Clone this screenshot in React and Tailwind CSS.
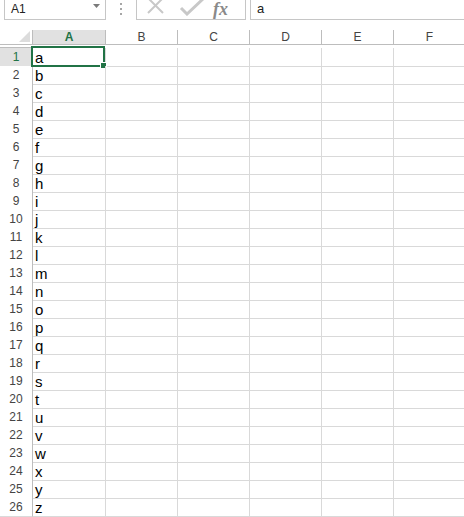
const COLS = ["A", "B", "C", "D", "E", "F"];
const LETTERS = "abcdefghijklmnopqrstuvwxyz".split("");

const TopBar = () => (
  <div className="flex h-[20px] overflow-hidden">
    {/* name box */}
    <div className="ml-[4px] flex h-[20px] w-[102px] items-center justify-between border-x border-b border-[#c6c6c6] pl-[6px] pr-[5px]">
      <span className="text-[12px] leading-none text-[#222] pb-[2px]">A1</span>
      <svg width="7" height="4" viewBox="0 0 7 4" className="mb-[8px]">
        <path d="M0 0 L7 0 L3.5 4 Z" fill="#7a7a7a" />
      </svg>
    </div>
    {/* grip dots */}
    <div className="flex w-[30px] flex-col items-center gap-[3px] pt-[3px]">
      <span className="block h-[2px] w-[2px] bg-[#a6a6a6]" />
      <span className="block h-[2px] w-[2px] bg-[#a6a6a6]" />
      <span className="block h-[2px] w-[2px] bg-[#a6a6a6]" />
    </div>
    {/* cancel / enter / fx */}
    <div className="flex h-[20px] w-[110px] items-start border-x border-b border-[#c6c6c6]">
      <svg width="18" height="18" viewBox="0 0 18 18" className="ml-[10px] mt-[-3px]">
        <path d="M1 1 L16 16 M16 1 L1 16" stroke="#c8c8c8" strokeWidth="2" fill="none" />
      </svg>
      <svg width="26" height="18" viewBox="0 0 26 18" className="ml-[14px] mt-[-2px]">
        <path d="M2 10 L8 16 L24 1" stroke="#c8c8c8" strokeWidth="3" fill="none" />
      </svg>
      <span className="ml-[8px] text-[18px] italic font-bold leading-[19px] text-[#8a8a8a] [font-family:'Liberation_Serif',serif]">
        fx
      </span>
    </div>
    {/* formula input */}
    <div className="ml-[4px] flex h-[20px] flex-1 items-center border-l border-b border-[#c6c6c6] pl-[6px]">
      <span className="text-[13px] leading-none text-[#222] pb-[3px]">a</span>
    </div>
  </div>
);

const HeaderRow = () => (
  <div className="grid h-[18px] grid-cols-[33px_73px_72px_72px_72px_72px_72px]">
    <div className="relative border-r border-b border-[#bdbdbd] bg-white">
      <svg width="11" height="11" viewBox="0 0 11 11" className="absolute right-[2px] bottom-[2px]">
        <path d="M11 0 L11 11 L0 11 Z" fill="#dcdcdc" />
      </svg>
    </div>
    {COLS.map((c) => (
      <div
        key={c}
        className={
          c === "A"
            ? "flex items-center justify-center border-r border-b border-[#bdbdbd] bg-[#e1e1e1] text-[12px] font-bold leading-none text-[#217346]"
            : "flex items-center justify-center border-r border-b border-[#bdbdbd] bg-white text-[12px] leading-none text-[#444]"
        }
      >
        {c}
      </div>
    ))}
    <div className="border-b border-[#bdbdbd]" />
  </div>
);

const Row = ({ n, letter }) => {
  const selected = n === 1;
  return (
    <div className="grid h-[18px] grid-cols-[33px_73px_72px_72px_72px_72px_72px]">
      <div
        className={
          selected
            ? "flex items-center justify-center border-r border-b border-[#bdbdbd] bg-[#e1e1e1] text-[12px] leading-none text-[#217346]"
            : "flex items-center justify-center border-r border-b border-[#dadada] border-r-[#bdbdbd] bg-white text-[12px] leading-none text-[#444]"
        }
      >
        {n}
      </div>
      <div className="relative border-r border-b border-[#d9d9d9] pl-[2px] pt-[1px] text-[15px] leading-[17px] text-black">
        {letter}
        {selected && (
          <>
            <div className="pointer-events-none absolute -left-[2px] -top-[2px] right-0 -bottom-[1px] border-2 border-[#217346]" />
            <div className="absolute -right-[2px] -bottom-[3px] h-[7px] w-[7px] border border-white bg-[#217346]" />
          </>
        )}
      </div>
      <div className="border-r border-b border-[#d9d9d9]" />
      <div className="border-r border-b border-[#d9d9d9]" />
      <div className="border-r border-b border-[#d9d9d9]" />
      <div className="border-r border-b border-[#d9d9d9]" />
      <div className="border-r border-b border-[#d9d9d9]" />
    </div>
  );
};

export default function App() {
  return (
    <div className="h-[517px] w-[464px] overflow-hidden bg-white [font-family:'Liberation_Sans',Arial,sans-serif]">
      <TopBar />
      <div className="h-[10px]" />
      <HeaderRow />
      {LETTERS.map((l, i) => (
        <Row key={l} n={i + 1} letter={l} />
      ))}
    </div>
  );
}
